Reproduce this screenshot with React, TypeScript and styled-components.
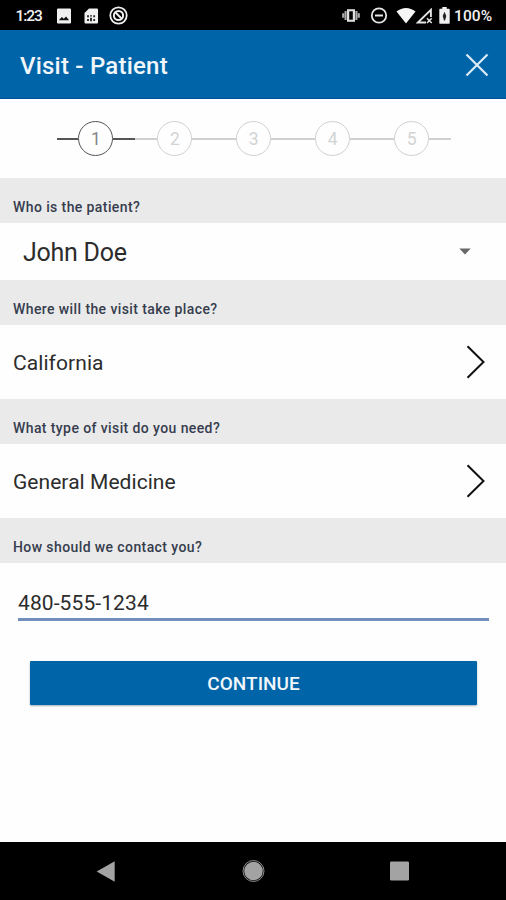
import React from "react";
import styled, { createGlobalStyle } from "styled-components";

const GlobalStyle = createGlobalStyle`
  *, *::before, *::after { box-sizing: border-box; }
  html, body { margin: 0; padding: 0; background: #fff; }
  body { font-family: Roboto, "Noto Sans", sans-serif; }
  svg { display: block; flex: none; }
`;

const Screen = styled.div`
  width: 506px;
  height: 900px;
  display: flex;
  flex-direction: column;
  background: #fefefe;
  overflow: hidden;
`;

const StatusBar = styled.div`
  height: 30px;
  flex: none;
  display: flex;
  align-items: center;
  justify-content: space-between;
  padding: 1px 13px 0 15.5px;
  background: #000;
  color: #f2f2f2;
`;

const StatusGroup = styled.div<{ $gap: number }>`
  display: flex;
  align-items: center;
  gap: ${(p) => p.$gap}px;
`;

const StatusText = styled.span<{ $width: number; $spacing: number }>`
  width: ${(p) => p.$width}px;
  font-size: 15.5px;
  font-weight: 500;
  line-height: 18px;
  letter-spacing: ${(p) => p.$spacing}px;
  white-space: nowrap;
`;

const Header = styled.header`
  height: 68.5px;
  flex: none;
  display: flex;
  align-items: center;
  justify-content: space-between;
  padding: 2px 17px 0 20px;
  background: #0065a8;
  border-bottom: 1px solid #034f98;
`;

const Title = styled.h1`
  margin: 0;
  padding-top: 2px;
  color: #f1f6fb;
  font-size: 24px;
  font-weight: 500;
  line-height: 30px;
  letter-spacing: 0.22px;
`;

const IconButton = styled.button`
  padding: 0;
  border: 0;
  background: none;
`;

const Stepper = styled.ol`
  height: 79.5px;
  flex: none;
  display: flex;
  align-items: center;
  list-style: none;
  margin: 0;
  padding: 1px 55px 0 56.5px;
`;

const Step = styled.li<{ $active: boolean }>`
  flex: 1;
  display: flex;
  align-items: center;
  color: ${(p) => (p.$active ? "#555" : "#cfd1d1")};
  &::before,
  &::after {
    content: "";
    flex: 1;
    height: 1.5px;
    background: currentColor;
  }
`;

const StepCircle = styled.span`
  width: 35px;
  height: 35px;
  display: flex;
  align-items: center;
  justify-content: center;
  border: 1.4px solid currentColor;
  border-radius: 50%;
  font-size: 17.5px;
  line-height: 20px;
`;

const StepNumber = styled.span<{ $active: boolean }>`
  color: ${(p) => (p.$active ? "#858585" : "#d2d4d4")};
`;

const SectionLabel = styled.h2<{ $height: number }>`
  height: ${(p) => p.$height}px;
  flex: none;
  margin: 0;
  padding: 0 13px 7px;
  display: flex;
  align-items: flex-end;
  background: #eaeaea;
  color: #363d4e;
  font-size: 14px;
  font-weight: 500;
  line-height: 18px;
  letter-spacing: 0.4px;
`;

const FieldRow = styled.div<{ $height: number; $size: number; $inset: string }>`
  height: ${(p) => p.$height}px;
  flex: none;
  display: flex;
  align-items: center;
  justify-content: space-between;
  padding: ${(p) => p.$inset};
  color: #2c2c2c;
  font-size: ${(p) => p.$size}px;
  line-height: 30px;
`;

const FieldValue = styled.span<{ $spacing: number }>`
  padding-top: 2px;
  letter-spacing: ${(p) => p.$spacing}px;
`;

const ContactForm = styled.div`
  flex: 1;
  padding: 25px 17px 0 18px;
  display: flex;
  flex-direction: column;
`;

const PhoneValue = styled.div`
  height: 33px;
  line-height: 30px;
  font-size: 21px;
  letter-spacing: 0.1px;
  color: #2c2c2c;
  border-bottom: 3px solid #7090bb;
`;

const ContinueButton = styled.button`
  height: 44px;
  margin: 40px 12px 0;
  padding: 2px 0 0;
  border: 0;
  border-radius: 1px;
  background: #0065a8;
  box-shadow: 0 1px 2px rgba(20, 50, 90, 0.4);
  color: #f1f6fb;
  font-family: inherit;
  font-size: 19px;
  font-weight: 500;
  line-height: 24px;
`;

const NavBar = styled.nav`
  height: 58px;
  flex: none;
  display: flex;
  align-items: center;
  justify-content: space-between;
  padding: 0 96px;
  background: #000;
`;

const PictureIcon = () => (
  <svg width="16" height="16" viewBox="0 0 16 16">
    <path d="M2 .5h12q1 0 1 1v13q0 1-1 1H2q-1 0-1-1v-13q0-1 1-1z" fill="#f0f0f0" />
    <path d="M2.8 12.3l3-3.4 2 1.8 2.3-2.2 3 3.8z" fill="#111" />
  </svg>
);

const SimIcon = () => (
  <svg width="14" height="16" viewBox="0 0 14 16">
    <path d="M5 .5h8q1 0 1 1v13q0 1-1 1H1.5q-1 0-1-1V5z" fill="#f0f0f0" />
    <path d="M3 7.3h2v2H3zm3 0h2v1.3H6zm3.2 0h1.9v2H9.2zM3 11h2v2H3zm3-1.3h2v3.5H6zm3.2 1.3h1.9v2H9.2z" fill="#333" />
  </svg>
);

const SyncIcon = () => (
  <svg width="19" height="19" viewBox="0 0 19 19" fill="none" stroke="#efefef">
    <circle cx="9.5" cy="9.5" r="8.2" strokeWidth="1.8" />
    <circle cx="9.5" cy="9.5" r="4.6" strokeWidth="2" />
    <path d="M6.300 6.300l6.400 6.400" strokeWidth="2" />
  </svg>
);

const VibrateIcon = () => (
  <svg width="18" height="15" viewBox="0 0 18 15">
    <path d="M5 1.200h8v12.600H5z" fill="#ddd" />
    <path d="M7.200 3.300h3.600v8.400H7.200z" fill="#000" />
    <path d="M3.600 3v9M1.200 5.300v4.500M14.400 3v9M16.800 5.300v4.500" stroke="#aaa" strokeWidth="2.100" />
  </svg>
);

const DoNotDisturbIcon = () => (
  <svg width="18" height="17" viewBox="0 0 18 17" fill="none" stroke="#e6e6e6">
    <circle cx="9" cy="8.5" r="7.2" strokeWidth="1.8" />
    <path d="M5 8.5h8" strokeWidth="2" />
  </svg>
);

const WifiIcon = () => (
  <svg width="20" height="16" viewBox="0 0 20 16">
    <path d="M.5 3.5Q5 0 10 0t9.500 3.500L10 15.500z" fill="#f5f5f5" />
  </svg>
);

const SignalIcon = () => (
  <svg width="17" height="16" viewBox="0 0 17 16" fill="none" stroke="#e6e6e6">
    <path d="M10 14.500H1.800L14.900 1.800V9" strokeWidth="1.900" />
    <path d="M11 10.300l4.700 4.700m0-4.700L11 15" strokeWidth="1.500" />
  </svg>
);

const BatteryIcon = () => (
  <svg width="11" height="17" viewBox="0 0 11 17">
    <path d="M3.300 0h4.400v1.800H10q.7 0 .7.7V16q0 .7-.7.7H1Q.3 16.700.3 16V2.500q0-.7.7-.7h2.300z" fill="#f0f0f0" />
    <path d="M5.500 4.700L3.700 9l1.300 4.500h1L7.300 9z" fill="#222" />
  </svg>
);

const CloseIcon = () => (
  <svg width="24" height="24" viewBox="0 0 24 24">
    <path d="M1.500 1.500l21 21m0-21l-21 21" stroke="#dcebf6" strokeWidth="2.200" />
  </svg>
);

const ChevronIcon = () => (
  <svg width="20" height="34" viewBox="0 0 20 34" fill="none">
    <path d="M1.500 1.200L17.500 17 1.500 32.800" stroke="#111" strokeWidth="2" />
  </svg>
);

const CaretIcon = () => (
  <svg width="12" height="7" viewBox="0 0 12 7">
    <path d="M.3.5h11.400L6 6.500z" fill="#686868" />
  </svg>
);

const BackIcon = () => (
  <svg width="19" height="21" viewBox="0 0 19 21">
    <path d="M.7 10.500L18.700.2v20.600z" fill="#a3a3a3" />
  </svg>
);

const HomeIcon = () => (
  <svg width="24" height="24" viewBox="0 0 24 24">
    <circle cx="12.500" cy="12" r="9.300" fill="#a3a3a3" />
    <circle cx="12.500" cy="12" r="10.500" fill="none" stroke="#8c8c8c" strokeWidth="1" />
  </svg>
);

const RecentIcon = () => (
  <svg width="20" height="20" viewBox="0 0 20 20">
    <rect x="0" y=".5" width="19" height="19" rx="1.300" fill="#a3a3a3" />
  </svg>
);

const steps = [1, 2, 3, 4, 5];
const currentStep = 1;

export default function App() {
  return (
    <>
      <GlobalStyle />
      <Screen>
        <StatusBar>
          <StatusGroup $gap={11.5}>
            <StatusText $width={29} $spacing={-1.1}>1:23</StatusText>
            <PictureIcon />
            <SimIcon />
            <SyncIcon />
          </StatusGroup>
          <StatusGroup $gap={6.5}>
            <StatusGroup $gap={8}>
              <StatusGroup $gap={10}>
                <VibrateIcon />
                <DoNotDisturbIcon />
              </StatusGroup>
              <StatusGroup $gap={0}>
                <WifiIcon />
                <SignalIcon />
              </StatusGroup>
            </StatusGroup>
            <StatusGroup $gap={4}>
              <BatteryIcon />
              <StatusText $width={39} $spacing={0.1}>100%</StatusText>
            </StatusGroup>
          </StatusGroup>
        </StatusBar>

        <Header>
          <Title>Visit - Patient</Title>
          <IconButton aria-label="Close">
            <CloseIcon />
          </IconButton>
        </Header>

        <Stepper>
          {steps.map((n) => (
            <Step key={n} $active={n === currentStep}>
              <StepCircle>
                <StepNumber $active={n === currentStep}>{n}</StepNumber>
              </StepCircle>
            </Step>
          ))}
        </Stepper>

        <SectionLabel $height={44.5}>Who is the patient?</SectionLabel>
        <FieldRow $height={57.5} $size={25} $inset="1px 35px 0 23px">
          <FieldValue $spacing={-0.25}>John Doe</FieldValue>
          <CaretIcon />
        </FieldRow>

        <SectionLabel $height={45}>Where will the visit take place?</SectionLabel>
        <FieldRow $height={74} $size={21} $inset="0 20px 0 13px">
          <FieldValue $spacing={0.08}>California</FieldValue>
          <ChevronIcon />
        </FieldRow>

        <SectionLabel $height={44.5}>What type of visit do you need?</SectionLabel>
        <FieldRow $height={74} $size={21} $inset="0 20px 0 13px">
          <FieldValue $spacing={0.05}>General Medicine</FieldValue>
          <ChevronIcon />
        </FieldRow>

        <SectionLabel $height={45}>How should we contact you?</SectionLabel>
        <ContactForm>
          <PhoneValue>480-555-1234</PhoneValue>
          <ContinueButton>CONTINUE</ContinueButton>
        </ContactForm>

        <NavBar>
          <BackIcon />
          <HomeIcon />
          <RecentIcon />
        </NavBar>
      </Screen>
    </>
  );
}
